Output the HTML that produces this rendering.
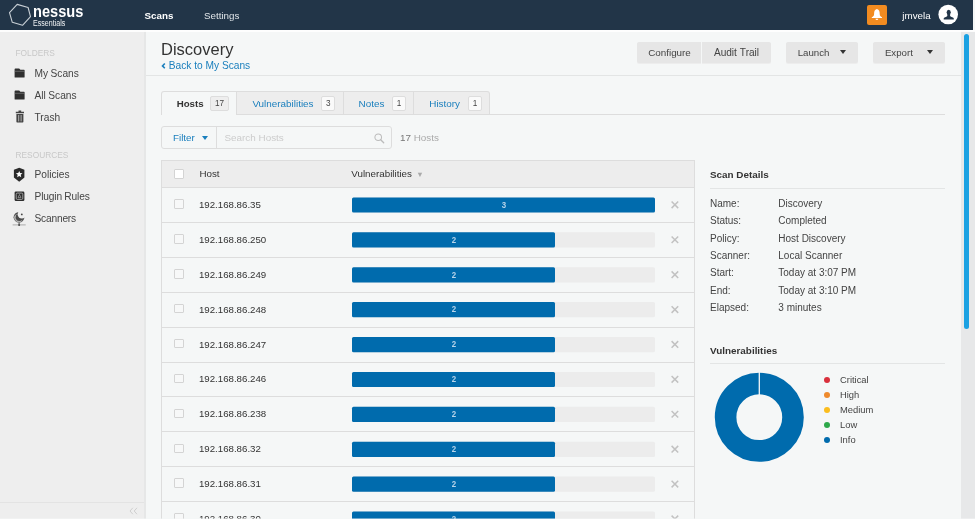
<!DOCTYPE html>
<html lang="en">
<head>
<meta charset="utf-8">
<title>Nessus Essentials / Folders / View Scan</title>
<style>
*{box-sizing:border-box;margin:0;padding:0}
html,body{width:975px;height:519px;overflow:hidden}
body{font-family:"Liberation Sans",sans-serif;font-size:9.8px;color:#333;background:#f5f7f7;position:relative}
#app{position:absolute;left:0;top:0;width:975px;height:519px;will-change:transform}
.abs{position:absolute;white-space:nowrap}
#hdr{position:absolute;left:0;top:0;width:973px;height:30px;background:#223548}
#hdr .nav{position:absolute;top:8.700px;font-size:9.8px;line-height:13px;color:#dfe4e8;white-space:nowrap}
#hdr .nav.on{color:#fff;font-weight:bold}
#logo-name{position:absolute;left:32.700px;top:2.200px;font-size:16.600px;line-height:20px;font-weight:bold;color:#fff;transform:scaleX(0.88);transform-origin:0 0}
#logo-sub{position:absolute;left:33.200px;top:18.500px;font-size:8.300px;line-height:9px;color:#f0f2f4;transform:scaleX(0.853);transform-origin:0 0}
#side{position:absolute;left:0;top:30px;width:146px;height:489px;background:#eee;border-right:2px solid #e6e7e7}
#side .h{position:absolute;left:15.500px;font-size:8.350px;line-height:11px;color:#c8c8c8}
#side .i{position:absolute;left:34.500px;font-size:10.2px;line-height:13px;color:#444;white-space:nowrap;word-spacing:-0.4px}
#side .foot{position:absolute;left:0;top:472px;width:144px;height:17px;border-top:1px solid #e3e3e3}
h1{position:absolute;left:161px;top:39.200px;font-size:16.500px;line-height:21px;font-weight:normal;color:#333}
.back{position:absolute;left:168.700px;top:59px;font-size:10.2px;line-height:13px;color:#1a7fbd}
.hr{position:absolute;background:#e3e5e5;height:1px}
.btn{position:absolute;top:42px;height:21px;box-shadow:0 1px 0 rgba(230,230,230,0.55);background:#e6e6e6;border-radius:2px;font-size:9.700px;line-height:22.600px;color:#444;text-align:center;white-space:nowrap}
.caret{position:absolute;width:0;height:0;border-left:3.500px solid transparent;border-right:3.500px solid transparent;border-top:4.100px solid #333}
.tab{position:absolute;top:91px;height:24px;font-size:9.900px;line-height:23px;color:#1a7fbd;background:#ededed;border:1px solid #ddd;border-left:none}
.tab.on{background:#f5f7f7;color:#333;font-weight:bold;font-size:9.700px;border-left:1px solid #ddd;border-bottom:none;border-radius:3px 0 0 0}
.tab span.t{position:absolute;top:-0.400px;white-space:nowrap}
.badge{position:absolute;top:4px;height:15px;border:1px solid #ddd;border-radius:2px;background:#fafafa;font-size:8.2px;line-height:13px;color:#444;text-align:center;font-weight:normal}
.tab.on .badge{background:#eee}
.cb{position:absolute;left:12px;width:9.600px;height:9.600px;border:1px solid #d4d4d4;border-radius:1px;background:#f7f8f8}
.th{font-size:9.8px;line-height:13px;color:#333}
.rl{position:absolute;left:0;width:532px;height:1px;background:#ddd}
.ip{left:36.900px;font-size:9.700px;line-height:13px;color:#333}
.tr{left:190px;width:303px;height:15.300px;background:#ececec;border-radius:1.500px}
.bar{height:15.300px;background:#006bad;border-radius:1.500px;color:#cfe3f0;font-size:7.500px;line-height:15px;text-align:center}
.sh{font-size:9.900px;line-height:13px;font-weight:bold;color:#333}
.dt{font-size:10px;line-height:13px;color:#444;white-space:nowrap}
.lg{font-size:9.4px;line-height:13px;color:#444;white-space:nowrap}
</style>
</head>
<body>
<div id="app">
<div id="hdr">
  <svg class="abs" style="left:8px;top:3px" width="24" height="24" viewBox="0 0 24 24"><polygon points="9.2,1.400 20.100,4.500 22.500,13.600 14.500,22.300 4.300,19.300 1.500,9.600" fill="none" stroke="#c9d0d6" stroke-width="1.1" stroke-linejoin="round"/></svg>
  <div id="logo-name">nessus</div>
  <div id="logo-sub">Essentials</div>
  <div class="nav on" style="left:144.500px">Scans</div>
  <div class="nav" style="left:204px">Settings</div>
  <div class="abs" style="left:867px;top:5px;width:20px;height:20px;background:#f28b20;border-radius:2px"></div>
  <svg class="abs" style="left:867px;top:5px" width="20" height="20" viewBox="0 0 20 20"><path d="M9.900 3.900C7.500 4.500 7.100 6.500 7.100 9C7.100 10.800 6.200 11.600 4.800 12.300V13.100H15V12.300C13.600 11.600 12.700 10.800 12.700 9C12.700 6.500 12.300 4.500 9.900 3.900ZM8.500 13.700a1.400 1.400 0 0 0 2.800 0z" fill="#fff"/></svg>
  <div class="nav" style="left:902.300px;top:9px;color:#fff">jmvela</div>
  <svg class="abs" style="left:938px;top:4px" width="20" height="21" viewBox="0 -0.5 20 21"><circle cx="10.200" cy="9.950" r="9.800" fill="#fff"/><ellipse cx="10.700" cy="7.700" rx="2.050" ry="2.500" fill="#223548"/><path d="M5.700 14.900V14C5.700 13 8.500 12.600 9.300 11.600V9.500H12.100V11.600C12.900 12.600 15.800 13 15.800 14V14.900Z" fill="#223548"/></svg>
</div>

<div id="side">
  <div class="h" style="top:17.600px">FOLDERS</div>
  <svg class="abs" style="left:14px;top:38px" width="12" height="11" viewBox="0 0 12 11"><path d="M0.600 1.300Q0.600 0.500 1.400 0.500H5.200L6.400 1.700H10Q10.600 1.700 10.600 2.300V9Q10.600 9.600 10 9.600H1.200Q0.600 9.600 0.600 9Z" fill="#2f2f2f"/><path d="M0.600 3.300H10.600" stroke="#8a8a8a" stroke-width="0.600"/></svg>
  <div class="i" style="top:37px">My Scans</div>
  <svg class="abs" style="left:14px;top:60px" width="12" height="11" viewBox="0 0 12 11"><path d="M0.600 1.300Q0.600 0.500 1.400 0.500H5.200L6.400 1.700H10Q10.600 1.700 10.600 2.300V9Q10.600 9.600 10 9.600H1.200Q0.600 9.600 0.600 9Z" fill="#2f2f2f"/><path d="M0.600 3.300H10.600" stroke="#8a8a8a" stroke-width="0.600"/></svg>
  <div class="i" style="top:59px">All Scans</div>
  <svg class="abs" style="left:15px;top:80.300px" width="10" height="13" viewBox="0 0 10 12.500" preserveAspectRatio="none"><path d="M3.500 0.500H6.200V1.700H9V3.200H0.800V1.700H3.500Z" fill="#444"/><path d="M1.400 3.800H8.400V11.400Q8.400 12.100 7.700 12.100H2.100Q1.400 12.100 1.400 11.400Z" fill="#444"/><path d="M3.700 4.800V11M6.100 4.800V11" stroke="#bdbdbd" stroke-width="0.900"/></svg>
  <div class="i" style="top:81px">Trash</div>
  <div class="h" style="top:119.600px">RESOURCES</div>
  <svg class="abs" style="left:13px;top:137px" width="13" height="15" viewBox="0 0 13 15"><path d="M6.200 0.800L11.400 2.800V10.400L6.200 14.700L0.900 10.400V2.800Z" fill="#2b2b2b"/><path d="M6.200 3.900L7.150 6.100L9.500 6.300L7.700 7.850L8.250 10.150L6.200 8.900L4.150 10.150L4.700 7.850L2.900 6.300L5.250 6.100Z" fill="#fff"/></svg>
  <div class="i" style="top:138px">Policies</div>
  <svg class="abs" style="left:14px;top:161px" width="11" height="11" viewBox="0 0 11 11"><rect x="0.600" y="0.500" width="9.800" height="9.500" rx="1.300" fill="#2e2e2e"/><rect x="2.200" y="2.100" width="6.600" height="6.300" rx="1.200" fill="none" stroke="#bbb" stroke-width="0.800"/><path d="M5.500 3.500L4 6.700H7Z" fill="none" stroke="#aaa" stroke-width="0.700"/></svg>
  <div class="i" style="top:160px;letter-spacing:-0.13px">Plugin Rules</div>
  <svg class="abs" style="left:12px;top:181px" width="15" height="16" viewBox="0 0 15 16"><circle cx="7" cy="6.300" r="5.400" fill="#4a4a4a"/><path d="M4.400 3.300A4.200 4.200 0 0 0 10.300 9.300M3 4.600A4.600 4.600 0 0 0 8.800 10.800" fill="none" stroke="#d8d8d8" stroke-width="0.700"/><circle cx="9.900" cy="3.300" r="4.300" fill="#eee"/><circle cx="9.800" cy="3.400" r="0.900" fill="#444"/><path d="M7.100 11.400V13.600" stroke="#555" stroke-width="1.100"/><path d="M0.600 13.900H13.700" stroke="#999" stroke-width="0.800"/><circle cx="7.100" cy="13.900" r="1" fill="#444"/></svg>
  <div class="i" style="top:182px;letter-spacing:-0.2px">Scanners</div>
  <div class="foot"></div>
  <svg class="abs" style="left:129px;top:477px" width="10" height="8" viewBox="0 0 10 8"><path d="M3.800 0.800L1 4L3.800 7.200M8 0.800L5.200 4L8 7.200" fill="none" stroke="#cfcfcf" stroke-width="1"/></svg>
</div>

<h1>Discovery</h1>
<svg class="abs" style="left:161px;top:62px" width="6" height="8" viewBox="0 0 6 8"><path d="M3.800 1.500L1.500 3.900L3.800 6.300" fill="none" stroke="#1a7fbd" stroke-width="1.600"/></svg>
<div class="back">Back to My Scans</div>
<div class="hr" style="left:146px;top:75px;width:815px"></div>

<div class="btn" style="left:637px;width:64px;border-radius:2px 0 0 2px;font-size:9.850px;padding-left:1px">Configure</div>
<div class="btn" style="left:702px;width:69px;border-radius:0 2px 2px 0;font-size:10.100px;word-spacing:0.300px">Audit Trail</div>
<div class="btn" style="left:786px;width:72px;text-align:left;padding-left:11.700px">Launch<i class="caret" style="left:54.300px;top:8px"></i></div>
<div class="btn" style="left:873px;width:72px;text-align:left;padding-left:11.900px">Export<i class="caret" style="left:54.400px;top:8px"></i></div>

<!-- tabs -->
<div class="hr" style="left:161px;top:114px;width:784px;background:#ddd"></div>
<div class="tab on" style="left:161px;width:76px"><span class="t" style="left:14.700px">Hosts</span><span class="badge" style="left:48px;width:19px">17</span></div>
<div class="tab" style="left:237px;width:106.500px"><span class="t" style="left:15.400px">Vulnerabilities</span><span class="badge" style="left:84.400px;width:13.600px">3</span></div>
<div class="tab" style="left:343.500px;width:70px"><span class="t" style="left:15.100px">Notes</span><span class="badge" style="left:48.300px;width:14.300px">1</span></div>
<div class="tab" style="left:413.500px;width:76px;border-radius:0 3px 0 0"><span class="t" style="left:15.800px">History</span><span class="badge" style="left:54.800px;width:13.600px">1</span></div>

<!-- filter -->
<div class="abs" style="left:161px;top:126px;width:231px;height:23px;border:1px solid #ddd;border-radius:3px"></div>
<div class="abs" style="left:216px;top:127px;width:1px;height:21px;background:#ddd"></div>
<div class="abs" style="left:173px;top:131.300px;font-size:9.8px;line-height:13px;color:#1a7fbd">Filter</div>
<i class="caret" style="left:202px;top:136.200px;border-top-color:#1a7fbd"></i>
<div class="abs" style="left:224.500px;top:131.100px;font-size:9.9px;line-height:13px;color:#ccc">Search Hosts</div>
<svg class="abs" style="left:373.500px;top:132.500px" width="11" height="11" viewBox="0 0 12 12"><circle cx="4.600" cy="4.600" r="3.600" fill="none" stroke="#bbb" stroke-width="1.100"/><path d="M7.300 7.300L10.600 10.600" stroke="#bbb" stroke-width="1.400" stroke-linecap="round"/></svg>
<div class="abs" style="left:400px;top:131px;font-size:9.9px;line-height:13px;color:#aaa"><span style="color:#777">17</span> Hosts</div>

<!-- table -->
<div class="abs" id="tbl" style="left:161px;top:160px;width:534px;height:359px;border:1px solid #ddd;border-bottom:none;overflow:hidden">
  <div class="abs" style="left:0;top:0;width:532px;height:26px;background:#ededed"></div>
  <div class="cb" style="top:8.400px;background:#fff"></div>
  <div class="abs th" style="left:37.400px;top:6.300px">Host</div>
  <div class="abs th" style="left:189.300px;top:6.300px">Vulnerabilities <span style="font-size:7.500px;color:#aaa;position:relative;top:-0.500px;left:1.500px">&#9660;</span></div>
  <div class="rl" style="top:26.00px"></div>
  <div class="cb" style="top:38.20px"></div>
  <div class="abs ip" style="top:36.90px">192.168.86.35</div>
  <div class="rl" style="top:60.90px"></div>
  <div class="cb" style="top:73.10px"></div>
  <div class="abs ip" style="top:71.80px">192.168.86.250</div>
  <div class="rl" style="top:95.80px"></div>
  <div class="cb" style="top:108.00px"></div>
  <div class="abs ip" style="top:106.70px">192.168.86.249</div>
  <div class="rl" style="top:130.70px"></div>
  <div class="cb" style="top:142.90px"></div>
  <div class="abs ip" style="top:141.60px">192.168.86.248</div>
  <div class="rl" style="top:165.60px"></div>
  <div class="cb" style="top:177.80px"></div>
  <div class="abs ip" style="top:176.50px">192.168.86.247</div>
  <div class="rl" style="top:200.50px"></div>
  <div class="cb" style="top:212.70px"></div>
  <div class="abs ip" style="top:211.40px">192.168.86.246</div>
  <div class="rl" style="top:235.40px"></div>
  <div class="cb" style="top:247.60px"></div>
  <div class="abs ip" style="top:246.30px">192.168.86.238</div>
  <div class="rl" style="top:270.30px"></div>
  <div class="cb" style="top:282.50px"></div>
  <div class="abs ip" style="top:281.20px">192.168.86.32</div>
  <div class="rl" style="top:305.20px"></div>
  <div class="cb" style="top:317.40px"></div>
  <div class="abs ip" style="top:316.10px">192.168.86.31</div>
  <div class="rl" style="top:340.10px"></div>
  <div class="cb" style="top:352.30px"></div>
  <div class="abs ip" style="top:351.00px">192.168.86.30</div>
  <svg class="abs" style="left:0;top:0" width="532" height="358" viewBox="0 0 532 358"><rect x="190" y="36.40" width="303" height="15.2" rx="1.5" fill="#ececec"/><rect x="190" y="36.40" width="303" height="15.2" rx="1.5" fill="#006bad"/><text x="339.8" y="46.70" textLength="4.4" lengthAdjust="spacingAndGlyphs" font-family="Liberation Sans, sans-serif" font-size="9" font-weight="bold" fill="#b7d4ea">3</text><path d="M509.60 40.55l6.6 6.6m0 -6.6l-6.6 6.6" stroke="#c2c2c2" stroke-width="1.5" fill="none"/><rect x="190" y="71.30" width="303" height="15.2" rx="1.5" fill="#ececec"/><rect x="190" y="71.30" width="203" height="15.2" rx="1.5" fill="#006bad"/><text x="289.8" y="81.60" textLength="4.4" lengthAdjust="spacingAndGlyphs" font-family="Liberation Sans, sans-serif" font-size="9" font-weight="bold" fill="#b7d4ea">2</text><path d="M509.60 75.45l6.6 6.6m0 -6.6l-6.6 6.6" stroke="#c2c2c2" stroke-width="1.5" fill="none"/><rect x="190" y="106.20" width="303" height="15.2" rx="1.5" fill="#ececec"/><rect x="190" y="106.20" width="203" height="15.2" rx="1.5" fill="#006bad"/><text x="289.8" y="116.50" textLength="4.4" lengthAdjust="spacingAndGlyphs" font-family="Liberation Sans, sans-serif" font-size="9" font-weight="bold" fill="#b7d4ea">2</text><path d="M509.60 110.35l6.6 6.6m0 -6.6l-6.6 6.6" stroke="#c2c2c2" stroke-width="1.5" fill="none"/><rect x="190" y="141.10" width="303" height="15.2" rx="1.5" fill="#ececec"/><rect x="190" y="141.10" width="203" height="15.2" rx="1.5" fill="#006bad"/><text x="289.8" y="151.40" textLength="4.4" lengthAdjust="spacingAndGlyphs" font-family="Liberation Sans, sans-serif" font-size="9" font-weight="bold" fill="#b7d4ea">2</text><path d="M509.60 145.25l6.6 6.6m0 -6.6l-6.6 6.6" stroke="#c2c2c2" stroke-width="1.5" fill="none"/><rect x="190" y="176.00" width="303" height="15.2" rx="1.5" fill="#ececec"/><rect x="190" y="176.00" width="203" height="15.2" rx="1.5" fill="#006bad"/><text x="289.8" y="186.30" textLength="4.4" lengthAdjust="spacingAndGlyphs" font-family="Liberation Sans, sans-serif" font-size="9" font-weight="bold" fill="#b7d4ea">2</text><path d="M509.60 180.15l6.6 6.6m0 -6.6l-6.6 6.6" stroke="#c2c2c2" stroke-width="1.5" fill="none"/><rect x="190" y="210.90" width="303" height="15.2" rx="1.5" fill="#ececec"/><rect x="190" y="210.90" width="203" height="15.2" rx="1.5" fill="#006bad"/><text x="289.8" y="221.20" textLength="4.4" lengthAdjust="spacingAndGlyphs" font-family="Liberation Sans, sans-serif" font-size="9" font-weight="bold" fill="#b7d4ea">2</text><path d="M509.60 215.05l6.6 6.6m0 -6.6l-6.6 6.6" stroke="#c2c2c2" stroke-width="1.5" fill="none"/><rect x="190" y="245.80" width="303" height="15.2" rx="1.5" fill="#ececec"/><rect x="190" y="245.80" width="203" height="15.2" rx="1.5" fill="#006bad"/><text x="289.8" y="256.10" textLength="4.4" lengthAdjust="spacingAndGlyphs" font-family="Liberation Sans, sans-serif" font-size="9" font-weight="bold" fill="#b7d4ea">2</text><path d="M509.60 249.95l6.6 6.6m0 -6.6l-6.6 6.6" stroke="#c2c2c2" stroke-width="1.5" fill="none"/><rect x="190" y="280.70" width="303" height="15.2" rx="1.5" fill="#ececec"/><rect x="190" y="280.70" width="203" height="15.2" rx="1.5" fill="#006bad"/><text x="289.8" y="291.00" textLength="4.4" lengthAdjust="spacingAndGlyphs" font-family="Liberation Sans, sans-serif" font-size="9" font-weight="bold" fill="#b7d4ea">2</text><path d="M509.60 284.85l6.6 6.6m0 -6.6l-6.6 6.6" stroke="#c2c2c2" stroke-width="1.5" fill="none"/><rect x="190" y="315.60" width="303" height="15.2" rx="1.5" fill="#ececec"/><rect x="190" y="315.60" width="203" height="15.2" rx="1.5" fill="#006bad"/><text x="289.8" y="325.90" textLength="4.4" lengthAdjust="spacingAndGlyphs" font-family="Liberation Sans, sans-serif" font-size="9" font-weight="bold" fill="#b7d4ea">2</text><path d="M509.60 319.75l6.6 6.6m0 -6.6l-6.6 6.6" stroke="#c2c2c2" stroke-width="1.5" fill="none"/><rect x="190" y="350.50" width="303" height="15.2" rx="1.5" fill="#ececec"/><rect x="190" y="350.50" width="203" height="15.2" rx="1.5" fill="#006bad"/><text x="289.8" y="360.80" textLength="4.4" lengthAdjust="spacingAndGlyphs" font-family="Liberation Sans, sans-serif" font-size="9" font-weight="bold" fill="#b7d4ea">2</text><path d="M509.60 354.65l6.6 6.6m0 -6.6l-6.6 6.6" stroke="#c2c2c2" stroke-width="1.5" fill="none"/></svg>
</div>

<!-- right panel -->
<div class="abs sh" style="left:710px;top:167.600px">Scan Details</div>
<div class="hr" style="left:710px;top:187.500px;width:235px"></div>
<div class="abs dt" style="left:710px;top:196.60px">Name:</div><div class="abs dt" style="left:778.300px;top:196.60px">Discovery</div>
<div class="abs dt" style="left:710px;top:214.05px">Status:</div><div class="abs dt" style="left:778.300px;top:214.05px">Completed</div>
<div class="abs dt" style="left:710px;top:231.50px">Policy:</div><div class="abs dt" style="left:778.300px;top:231.50px">Host Discovery</div>
<div class="abs dt" style="left:710px;top:248.95px">Scanner:</div><div class="abs dt" style="left:778.300px;top:248.95px">Local Scanner</div>
<div class="abs dt" style="left:710px;top:266.40px">Start:</div><div class="abs dt" style="left:778.300px;top:266.40px">Today at 3:07 PM</div>
<div class="abs dt" style="left:710px;top:283.85px">End:</div><div class="abs dt" style="left:778.300px;top:283.85px">Today at 3:10 PM</div>
<div class="abs dt" style="left:710px;top:301.30px">Elapsed:</div><div class="abs dt" style="left:778.300px;top:301.30px">3 minutes</div>

<div class="abs sh" style="left:710px;top:344px">Vulnerabilities</div>
<div class="hr" style="left:710px;top:363.200px;width:235px"></div>
<svg class="abs" style="left:710px;top:368px" width="100" height="100" viewBox="710 368 100 100"><circle cx="759.300" cy="417.200" r="33.700" fill="none" stroke="#006bad" stroke-width="21.600"/><path d="M759.300 372V395" stroke="#f5f7f7" stroke-width="1.300"/></svg>
<div class="abs" style="left:823.500px;top:376.50px;width:6.400px;height:6.400px;border-radius:50%;background:#d9303c"></div><div class="abs lg" style="left:840px;top:372.50px">Critical</div>
<div class="abs" style="left:823.500px;top:391.60px;width:6.400px;height:6.400px;border-radius:50%;background:#ee8a2c"></div><div class="abs lg" style="left:840px;top:387.60px">High</div>
<div class="abs" style="left:823.500px;top:406.70px;width:6.400px;height:6.400px;border-radius:50%;background:#fbbd1e"></div><div class="abs lg" style="left:840px;top:402.70px">Medium</div>
<div class="abs" style="left:823.500px;top:421.80px;width:6.400px;height:6.400px;border-radius:50%;background:#2ea84a"></div><div class="abs lg" style="left:840px;top:417.80px">Low</div>
<div class="abs" style="left:823.500px;top:436.90px;width:6.400px;height:6.400px;border-radius:50%;background:#006bad"></div><div class="abs lg" style="left:840px;top:432.90px">Info</div>

<!-- scrollbar -->
<div class="abs" style="left:961px;top:31px;width:14px;height:488px;background:#e7e8e9"></div>
<div class="abs" style="left:0;top:30px;width:975px;height:2px;background:rgba(255,255,255,0.85)"></div>
<div class="abs" style="left:0;top:518px;width:975px;height:1px;background:rgba(245,247,247,0.45)"></div>
<div class="abs" style="left:964px;top:33.500px;width:5px;height:295px;border-radius:2.500px;background:#1ba1e2"></div>

</div>
</body>
</html>
